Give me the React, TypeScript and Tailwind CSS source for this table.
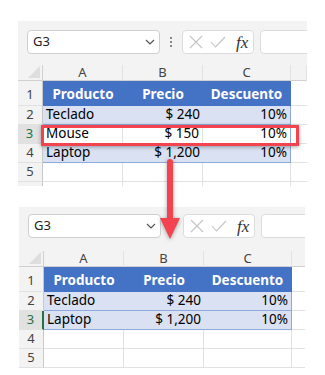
import React from "react"

type RowKind = "head" | "band" | "plain" | "empty"

interface Row {
    num: string
    kind: RowKind
    cells: string[]
    selected?: boolean
}

const Chevron = () => (
    <svg width="10" height="6" viewBox="0 0 10 6" fill="none">
        <path d="M1 1l4 4 4-4" stroke="#555" strokeWidth="1.2" />
    </svg>
)

const Toolbar = ({ top }: { top: string }) => (
    <div className={`flex items-start ${top} pl-[9px] h-[44px]`}>
        <div className="w-[133px] h-[24px] shrink-0 rounded-[4px] border border-[#cfcfcf] bg-white flex items-center justify-between pl-[5px] pr-[4px] text-[13px] text-[#222]">
            <span>G3</span>
            <Chevron />
        </div>
        <div className="w-[22px] h-[24px] shrink-0 flex flex-col items-center justify-center gap-[2px]">
            <span className="w-[2px] h-[2px] bg-[#888]" />
            <span className="w-[2px] h-[2px] bg-[#888]" />
            <span className="w-[2px] h-[2px] bg-[#888]" />
        </div>
        <div className="w-[72px] h-[24px] shrink-0 rounded-[4px] border border-[#dcdcdc] bg-white flex items-center pl-[6px] gap-[7px]">
            <svg width="14" height="14" viewBox="0 0 14 14" fill="none">
                <path d="M1 1l12 12M13 1L1 13" stroke="#c4c4c4" strokeWidth="1.1" />
            </svg>
            <svg width="16" height="12" viewBox="0 0 16 12" fill="none">
                <path d="M1 6l4.5 5L15 1" stroke="#c4c4c4" strokeWidth="1.1" />
            </svg>
            <span className="ml-[3px] font-['Liberation_Serif',serif] italic text-[17px] leading-none text-[#333]">fx</span>
        </div>
        <div className="w-[80px] h-[24px] shrink-0 ml-[6px] rounded-[4px] border border-[#dcdcdc] bg-white" />
    </div>
)

const cellClass = (kind: RowKind, col: number) => {
    const base = "flex items-center text-[13.5px] leading-none px-[3px] border-b"
    const align = col === 0 ? "justify-start" : "justify-end"
    if (kind === "head")
        return `${base} justify-center bg-[#4472c4] text-white font-bold border-[#4472c4] ${col === 2 ? "border-r border-r-[#4472c4]" : ""}`
    if (kind === "band")
        return `${base} ${align} bg-[#d9e1f2] text-black border-b-[#8ea9db] ${col === 2 ? "border-r border-r-[#8ea9db]" : ""}`
    if (kind === "plain")
        return `${base} ${align} bg-white text-black border-b-[#8ea9db] border-r ${col === 2 ? "border-r-[#8ea9db]" : "border-r-[#e1e1e1]"}`
    return `${base} bg-white border-b-[#e1e1e1] border-r border-r-[#e1e1e1]`
}

const Sheet = ({ rows }: { rows: Row[] }) => (
    <div className="grid grid-cols-[25px_80px_80px_88px_16px] text-[#444]">
        <div className="h-[16px] bg-[#f3f3f3] border-b border-r border-[#d0d0d0] relative overflow-hidden">
            <div className="absolute right-[2px] bottom-[2px] w-0 h-0 border-l-[12px] border-l-transparent border-b-[12px] border-b-[#dedede]" />
        </div>
        {["A", "B", "C", ""].map((c, i) => (
            <div key={i} className="h-[16px] flex items-center justify-center text-[13px] bg-[#f3f3f3] border-b border-b-[#d0d0d0] border-r border-r-[#e2e2e2]">
                {c}
            </div>
        ))}
        {rows.map((r, idx) => (
            <React.Fragment key={idx}>
                <div
                    className={`${r.kind === "head" ? "h-[25px]" : "h-[19px]"} flex items-center justify-center text-[13px] border-b border-b-[#e1e1e1] ${r.selected ? "bg-[#e1e1e1] text-[#217346] border-r-2 border-r-[#217346]" : "bg-[#f3f3f3] border-r border-r-[#c8c8c8]"} ${r.kind === "head" ? "pt-[3px]" : ""}`}
                >
                    {r.num}
                </div>
                {[0, 1, 2].map((i) => (
                    <div key={i} className={`${r.kind === "head" ? "h-[25px] pt-[3px]" : "h-[19px]"} ${cellClass(r.kind, i)}`}>
                        {r.cells[i] ?? ""}
                    </div>
                ))}
                <div className={`${r.kind === "head" ? "h-[25px]" : "h-[19px]"} bg-white border-b border-b-[#e1e1e1]`} />
            </React.Fragment>
        ))}
    </div>
)

export default function App() {
    const before: Row[] = [
        { num: "1", kind: "head", cells: ["Producto", "Precio", "Descuento"] },
        { num: "2", kind: "band", cells: ["Teclado", "$ 240", "10%"] },
        { num: "3", kind: "plain", cells: ["Mouse", "$ 150", "10%"], selected: true },
        { num: "4", kind: "band", cells: ["Laptop", "$ 1,200", "10%"] },
        { num: "5", kind: "empty", cells: [] },
        { num: "", kind: "empty", cells: [] },
    ]
    const after: Row[] = [
        { num: "1", kind: "head", cells: ["Producto", "Precio", "Descuento"] },
        { num: "2", kind: "band", cells: ["Teclado", "$ 240", "10%"] },
        { num: "3", kind: "band", cells: ["Laptop", "$ 1,200", "10%"], selected: true },
        { num: "4", kind: "empty", cells: [] },
        { num: "5", kind: "empty", cells: [] },
    ]

    return (
        <div className="relative w-[325px] h-[375px] bg-white overflow-hidden font-['Noto_Sans',sans-serif]">
            <div className="pt-[21px] pl-[18px]">
                <div className="relative w-[289px] h-[165px] bg-[#f3f3f3] overflow-hidden">
                    <Toolbar top="pt-[9px]" />
                    <Sheet rows={before} />
                    <div className="absolute left-[23px] top-[104px] w-[258px] h-[21px] border-[3px] border-[#f2434f] shadow-[0_1px_4px_rgba(0,0,0,0.35)]" />
                </div>
            </div>
            <div className="pt-[21px] pl-[19px]">
                <div className="w-[286px] h-[161px] bg-[#f3f3f3] overflow-hidden">
                    <Toolbar top="pt-[7px]" />
                    <Sheet rows={after} />
                </div>
            </div>
            <div className="absolute left-[160px] top-[159px] w-[20px] h-[80px] flex flex-col items-center drop-shadow-[0_1px_2px_rgba(0,0,0,0.35)]">
                <div className="w-[6px] h-[60px] bg-[#f2434f] rounded-t-full" />
                <div className="w-0 h-0 border-l-[10px] border-l-transparent border-r-[10px] border-r-transparent border-t-[21px] border-t-[#f2434f]" />
            </div>
        </div>
    )
}
